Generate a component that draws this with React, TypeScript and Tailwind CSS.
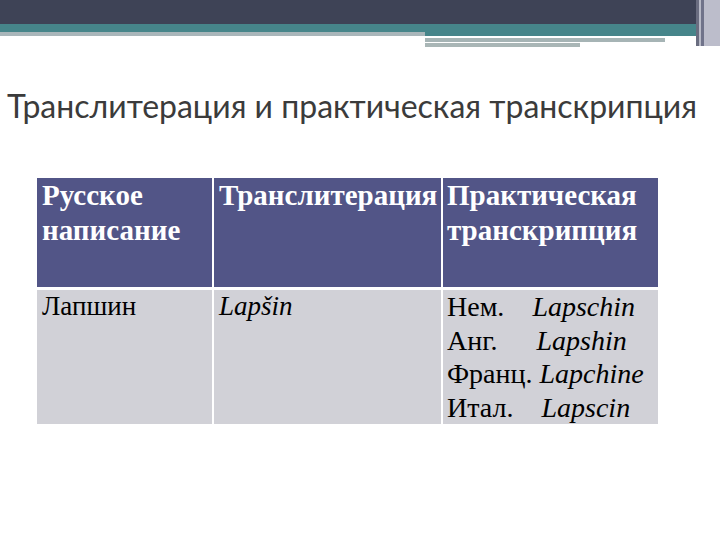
export default function App() {
  return (
    <div className="relative w-[720px] h-[540px] bg-white overflow-hidden">
      {/* верхняя декоративная полоса */}
      <div className="flex flex-col">
        <div className="h-[24px] bg-[#3e4356]" />
        <div className="flex">
          <div className="w-[425px]">
            <div className="h-[8px] bg-[#46858a]" />
            <div className="h-[4px] bg-[#a9b6ba]" />
          </div>
          <div className="flex-1">
            <div className="h-[12px] bg-[#46858a]" />
            <div className="h-[2px] bg-white" />
            <div className="h-[4px] w-[240px] bg-[#a6b4b5]" />
            <div className="h-[1px]" />
            <div className="h-[4px] w-[155px] bg-[#a9b6b6]" />
          </div>
        </div>
      </div>
      <div className="absolute top-0 right-0 h-[46px] w-[24px] flex">
        <div className="w-[3px] bg-[#6a6d80]" />
        <div className="w-[2px] bg-[#b7b9c6]" />
        <div className="w-[3px] bg-[#70738a]" />
        <div className="flex-1 bg-[#bcbdcb]" />
      </div>

      <h1 className="mt-[39px] pl-[7px] text-[32px] leading-[40px] text-[#3b3b3b] font-['Lato','Noto_Sans',sans-serif]">
        Транслитерация и практическая транскрипция
      </h1>

      <div className="ml-[37px] mt-[52px] w-[621px] font-['Liberation_Serif','DejaVu_Serif',serif]">
        <div className="grid grid-cols-[175px_227px_215px] gap-x-[2px] h-[109px]">
          <div className="bg-[#525587] text-white font-bold text-[29px] leading-[35px] px-[5px]">
            Русское
            <br />
            написание
          </div>
          <div className="bg-[#525587] text-white font-bold text-[29px] leading-[35px] px-[5px]">
            Транслитерация
          </div>
          <div className="bg-[#525587] text-white font-bold text-[29px] leading-[35px] px-[4px]">
            Практическая
            <br />
            транскрипция
          </div>
        </div>
        <div className="h-[3px]" />
        <div className="grid grid-cols-[175px_227px_215px] gap-x-[2px] h-[131px]">
          <div className="bg-[#d1d1d7] text-black text-[27px] leading-[33.5px] px-[5px]">
            Лапшин
          </div>
          <div className="bg-[#d1d1d7] text-black text-[27px] leading-[33.5px] px-[5px] italic">
            Lapšin
          </div>
          <div className="bg-[#d1d1d7] text-black text-[28px] leading-[33.5px] px-[4px]">
            <div>
              Нем.<i className="ml-[28px]">Lapschin</i>
            </div>
            <div>
              Анг.<i className="ml-[39px]">Lapshin</i>
            </div>
            <div>
              Франц.<i className="ml-[7px]">Lapchine</i>
            </div>
            <div>
              Итал.<i className="ml-[28px]">Lapscin</i>
            </div>
          </div>
        </div>
      </div>
    </div>
  );
}
